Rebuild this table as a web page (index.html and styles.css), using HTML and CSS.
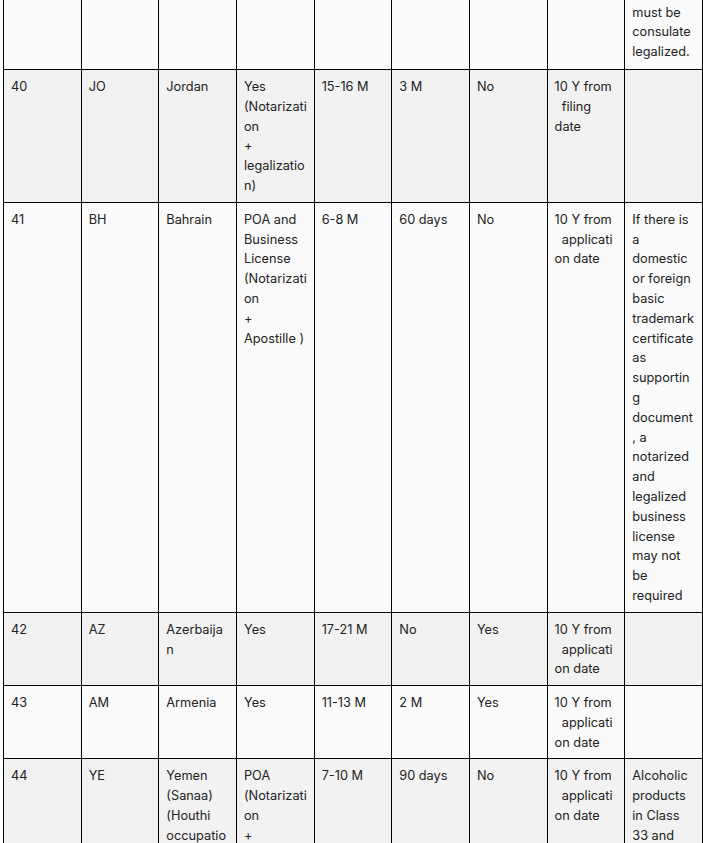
FILE: index.html
```html
<!DOCTYPE html>
<html lang="en">
<head>
<meta charset="utf-8">
<title>Trademark table</title>
<link rel="stylesheet" href="styles.css">
</head>
<body>
<table class="grid">
  <tbody>
    <tr class="row row-light row-cut">
      <td></td><td></td><td></td><td></td><td></td><td></td><td></td><td></td>
      <td>must be consulate legalized.</td>
    </tr>
    <tr class="row row-grey">
      <td>40</td><td>JO</td><td>Jordan</td>
      <td>Yes (Notarization<br>+ legalization)</td>
      <td>15-16 M</td><td>3 M</td><td>No</td>
      <td>10 Y from &nbsp;&nbsp;filing date</td>
      <td></td>
    </tr>
    <tr class="row row-light">
      <td>41</td><td>BH</td><td>Bahrain</td>
      <td>POA and Business License (Notarization<br>+ Apostille )</td>
      <td>6-8 M</td><td>60 days</td><td>No</td>
      <td>10 Y from &nbsp;&nbsp;application date</td>
      <td>If there is a domestic or foreign basic trademark certificate as supporting document, a notarized and legalized business license may not be required</td>
    </tr>
    <tr class="row row-grey">
      <td>42</td><td>AZ</td><td>Azerbaijan</td>
      <td>Yes</td>
      <td>17-21 M</td><td>No</td><td>Yes</td>
      <td>10 Y from &nbsp;&nbsp;application date</td>
      <td></td>
    </tr>
    <tr class="row row-light">
      <td>43</td><td>AM</td><td>Armenia</td>
      <td>Yes</td>
      <td>11-13 M</td><td>2 M</td><td>Yes</td>
      <td>10 Y from &nbsp;&nbsp;application date</td>
      <td></td>
    </tr>
    <tr class="row row-grey">
      <td>44</td><td>YE</td><td>Yemen (Sanaa) (Houthi occupation)</td>
      <td>POA (Notarization<br>+ legalization)</td>
      <td>7-10 M</td><td>90 days</td><td>No</td>
      <td>10 Y from &nbsp;&nbsp;application date</td>
      <td>Alcoholic products in Class 33 and similar goods</td>
    </tr>
  </tbody>
</table>
</body>
</html>
```
FILE: styles.css
```css
html, body {
  margin: 0;
  padding: 0;
  background: #ffffff;
}

body {
  font-family: Inter, "Noto Sans", sans-serif;
  font-size: 12.75px;
  line-height: 19.8px;
  color: #222222;
}

.grid {
  margin-left: 3px;
  width: 700px;
  table-layout: fixed;
  border-collapse: collapse;
}

.grid td {
  border: 1px solid #000000;
  padding: 7px 6.5px 6px 7px;
  vertical-align: top;
  overflow-wrap: break-word;
  word-wrap: break-word;
}

.row-grey td {
  background: #f2f2f2;
}

.row-light td {
  background: #fafafa;
}

.row-cut td {
  border-top: none;
  padding-top: 2.6px;
  padding-bottom: 7px;
}
```
